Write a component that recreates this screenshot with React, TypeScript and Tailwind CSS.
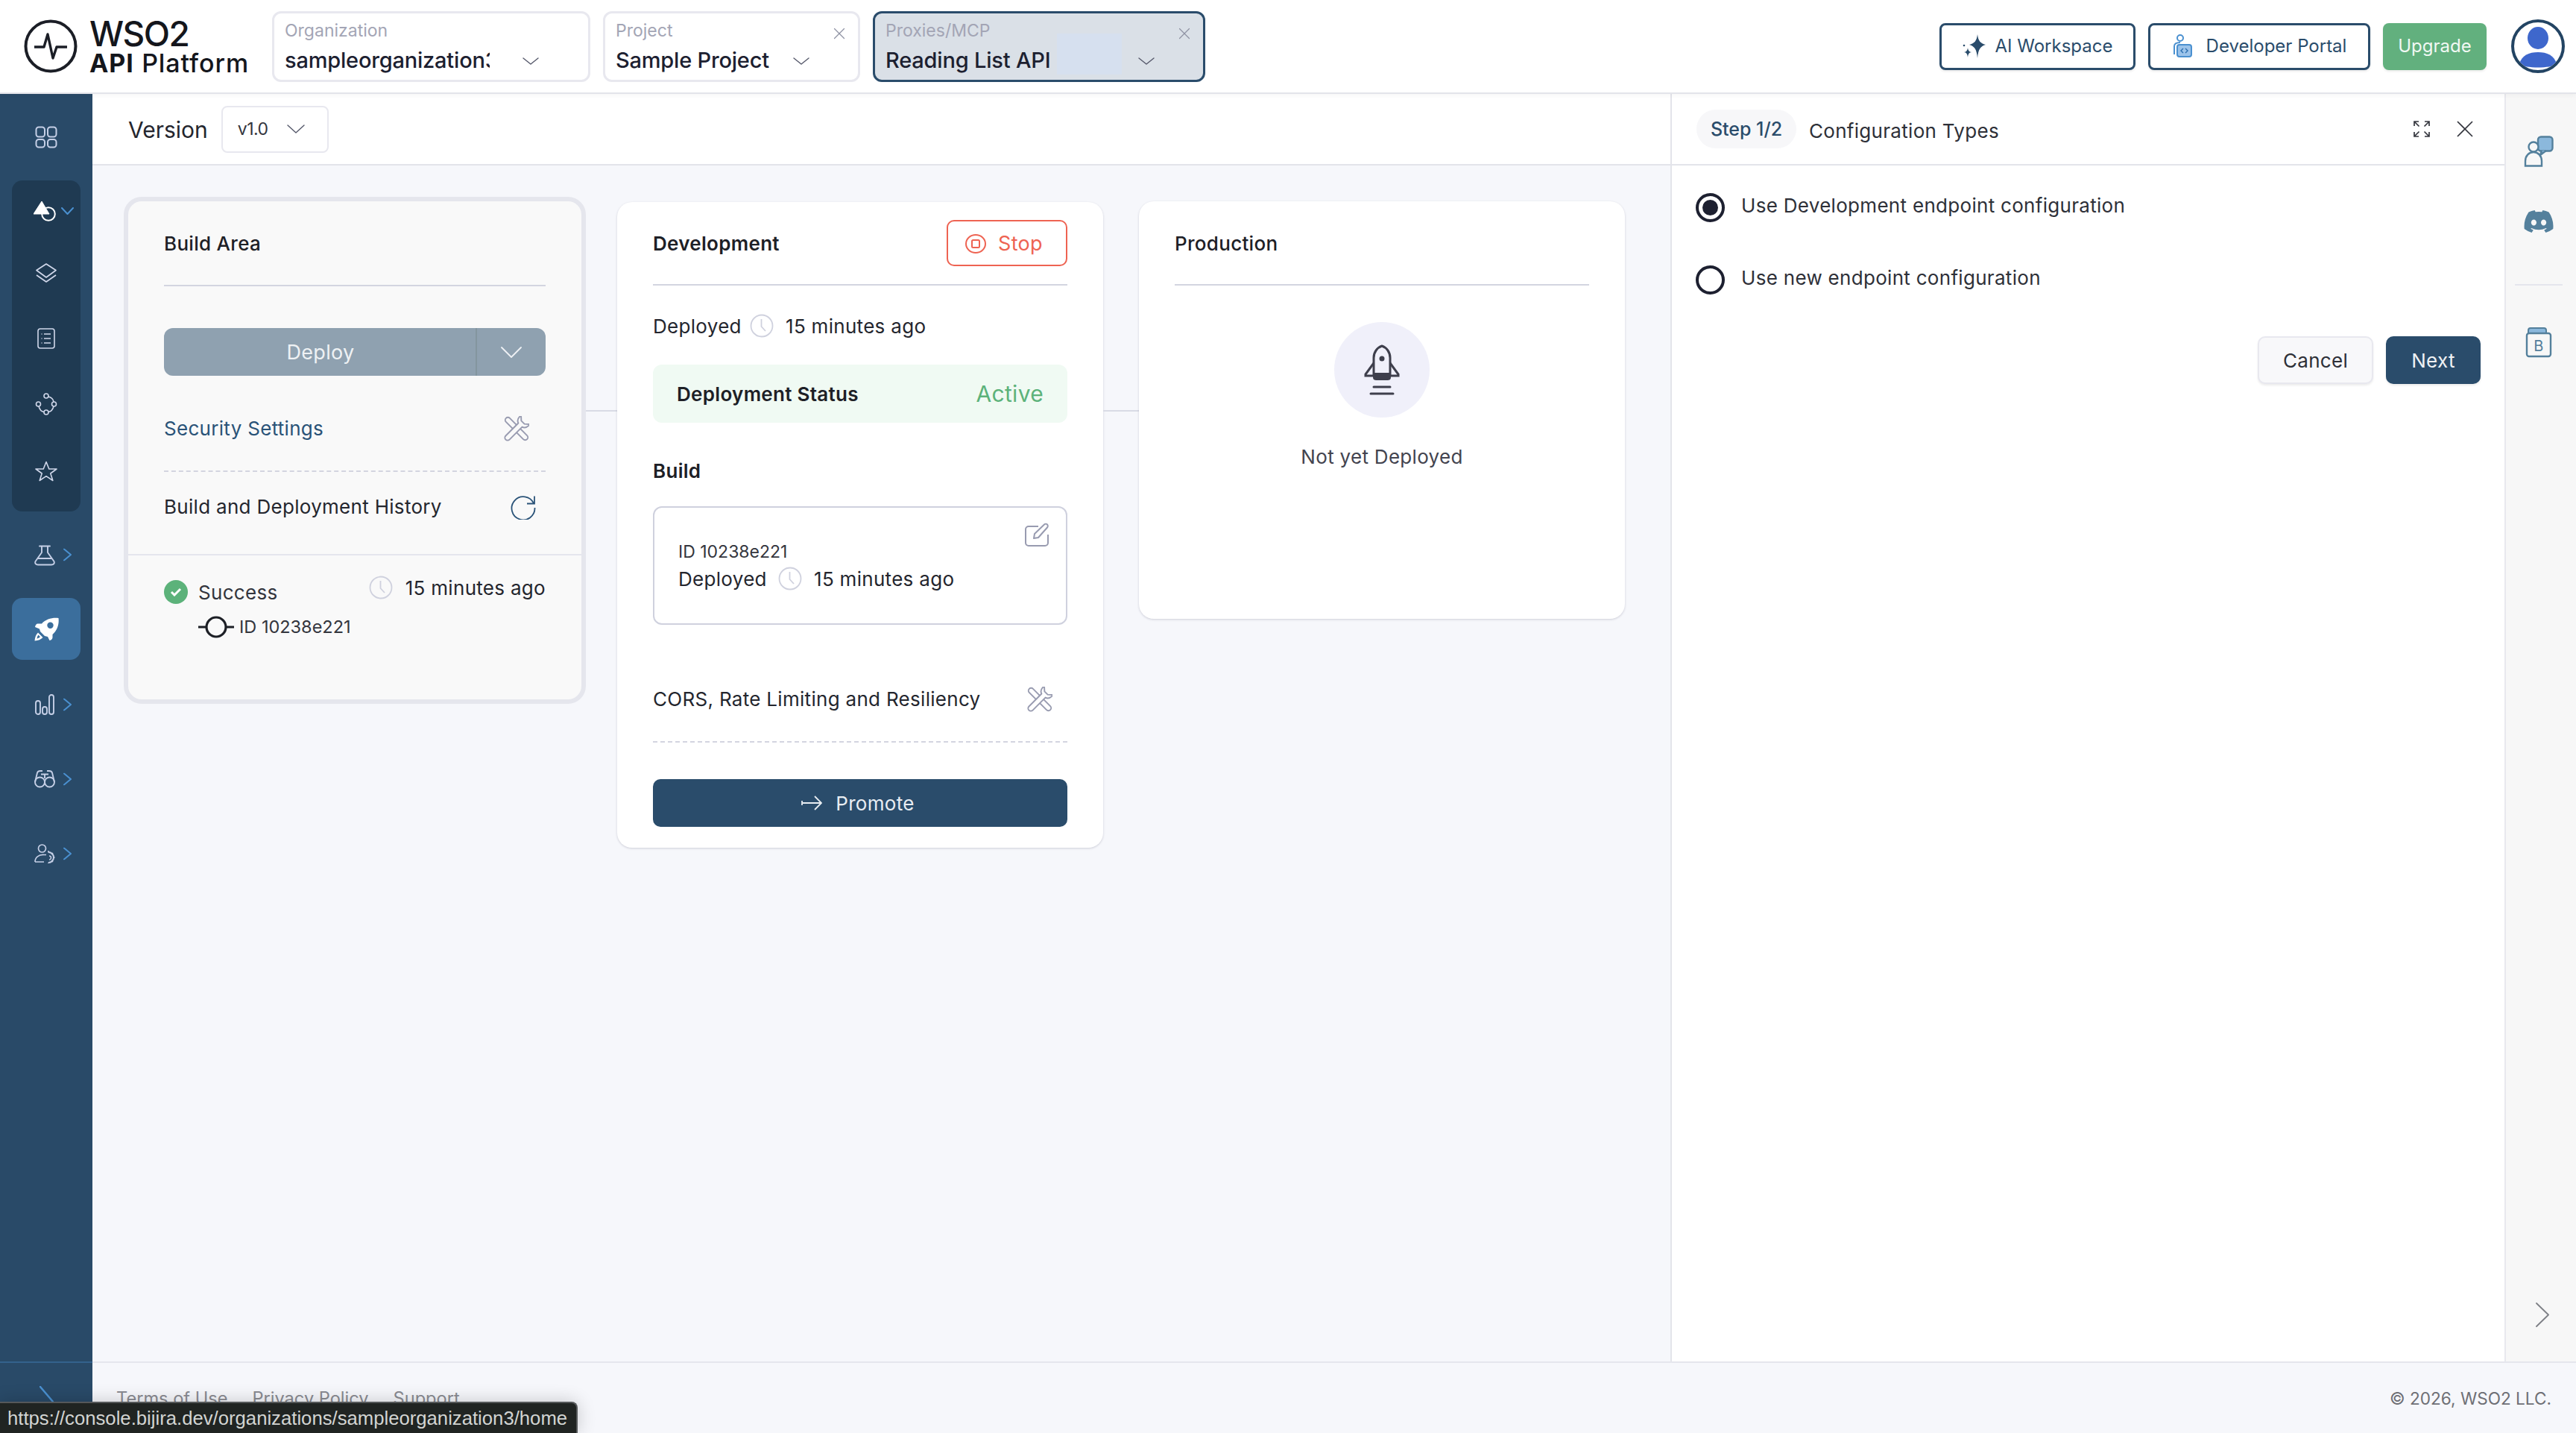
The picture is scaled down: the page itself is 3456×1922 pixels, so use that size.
import { X } from "lucide-react";

const Chev = ({ w, h, dir = "down", sw = 1.5, className }: { w: number; h: number; dir?: "down" | "right"; sw?: number; className?: string }) => (
  <svg width={w} height={h} viewBox={`0 0 ${w} ${h}`} fill="none" stroke="currentColor" strokeWidth={sw} strokeLinecap="round" strokeLinejoin="round" className={`shrink-0 ${className ?? ""}`}>
    {dir === "down" ? <path d={`M1 1L${w / 2} ${h - 1}L${w - 1} 1`} /> : <path d={`M1 1L${w - 1} ${h / 2}L1 ${h - 1}`} />}
  </svg>
);

const SideItem = ({ h, children }: { h: string; children: React.ReactNode }) => (
  <div className={`relative -mx-[16px] flex items-center justify-center pr-[4px] text-[#c5cfe6] ${h}`}>
    {children}
    <Chev w={11} h={17} dir="right" sw={2} className="absolute left-[85px] top-1/2 -translate-y-1/2 text-[#4a90d0]" />
  </div>
);

const Sidebar = () => (
  <aside className="flex w-[124px] shrink-0 flex-col bg-[#294a68]">
    <div className="flex flex-1 flex-col px-[16px]">
      <div className="flex h-[116px] items-center justify-center text-[#c5cfe6]">
        <svg width="30" height="30" viewBox="0 0 30 30" fill="none" stroke="currentColor" strokeWidth="2">
          <rect x="1.5" y="1.5" width="11.5" height="13" rx="3.5" />
          <rect x="17" y="1.5" width="11.5" height="13" rx="3.5" />
          <rect x="1.5" y="18" width="11.5" height="10.5" rx="3.5" />
          <rect x="17" y="18" width="11.5" height="10.5" rx="3.5" />
        </svg>
      </div>
      <div className="flex h-[444px] flex-col items-center rounded-[14px] bg-[#1f3a52] pt-[2px] text-[#d0d7ea]">
        <div className="relative flex h-[78px] w-full items-center justify-center">
          <svg width="30" height="28" viewBox="0 0 30 28" fill="none" className="mr-[4px]">
            <circle cx="20" cy="18" r="8.8" stroke="#fff" strokeWidth="2" />
            <path d="M11 1L21 18H0Z" fill="#fff" stroke="#fff" strokeWidth="1" strokeLinejoin="round" />
          </svg>
          <Chev w={17} h={10} sw={2} className="absolute left-[66px] top-[34px] text-[#4a90d0]" />
        </div>
        <div className="flex h-[88px] w-full items-center justify-center">
          <svg width="30" height="28" viewBox="0 0 30 28" fill="none" stroke="currentColor" strokeWidth="1.7" strokeLinejoin="round">
            <path d="M15 2L28 10.5L15 20L2 10.5Z" />
            <path d="M2 17L15 26L28 17" />
          </svg>
        </div>
        <div className="flex h-[88px] w-full items-center justify-center">
          <svg width="24" height="28" viewBox="0 0 24 28" fill="none" stroke="currentColor" strokeWidth="1.6">
            <rect x="1" y="1" width="22" height="26" rx="3" />
            <path d="M9 8h9M9 14h9M9 20h9M5.5 8h1M5.5 14h1M5.5 20h1" />
          </svg>
        </div>
        <div className="flex h-[88px] w-full items-center justify-center">
          <svg width="30" height="30" viewBox="0 0 30 30" fill="none" stroke="currentColor" strokeWidth="1.6">
            <circle cx="4.5" cy="15" r="3" />
            <circle cx="15" cy="4" r="3" />
            <circle cx="15" cy="26" r="3" />
            <circle cx="25.5" cy="15" r="3" />
            <path d="M18 5C22 6 24.5 9 25 12M5 18C6 22 9 25 12 25.5M18 25.5C21 25 24 22 25 18" />
          </svg>
        </div>
        <div className="flex h-[92px] w-full items-center justify-center">
          <svg width="30" height="28" viewBox="0 0 30 28" fill="none" stroke="currentColor" strokeWidth="1.6" strokeLinejoin="round">
            <path d="M15 1.5L18.8 11H29L20.8 17L23.8 26.5L15 20.7L6.2 26.5L9.2 17L1 11H11.2Z" />
          </svg>
        </div>
      </div>
      <SideItem h="h-[116px] pt-[2px]">
        <svg width="28" height="28" viewBox="0 0 28 28" fill="none" stroke="currentColor" strokeWidth="1.9" strokeLinejoin="round" strokeLinecap="round">
          <path d="M7 1.5H21M10 1.5V10L1.5 22C0.5 24.5 2 26.5 5 26.5H23C26 26.5 27.5 24.5 26.5 22L18 10V1.5" />
          <path d="M5 18H23" />
        </svg>
      </SideItem>
      <div className="flex h-[83px] items-center justify-center rounded-[14px] bg-[#3b6e9c] text-white">
        <svg width="33" height="32" viewBox="0 0 33 32" fill="white">
          <path fillRule="evenodd" d="M32.5 1C25 0 15.5 2 10 8.5L4.5 8.5C3 8.5 1.5 10 1 13L7 15.5L8 19L14 25L18 26L20.5 31C23 30.5 24.5 28.5 24.5 27L24.5 23C31 17 33.5 9 32.5 1ZM21.5 6.5A4.2 4.2 0 1 1 21.5 14.9A4.2 4.2 0 0 1 21.5 6.5Z" />
          <path fillRule="evenodd" d="M0.5 31.5C1 27 2 23 5 20.5L11.5 27C9 29.8 5 31.2 0.5 31.5ZM3.5 28.5C5 28.2 6.6 27.4 8 26.2L5.4 23.6C4.4 25 3.8 26.8 3.5 28.5Z" />
        </svg>
      </div>
      <SideItem h="h-[100px] mt-[10px]">
        <svg width="26" height="28" viewBox="0 0 26 28" fill="none" stroke="currentColor" strokeWidth="1.9">
          <rect x="1" y="9" width="6" height="18" rx="3" />
          <rect x="10" y="17" width="6" height="10" rx="3" />
          <rect x="19" y="1" width="6" height="26" rx="3" />
        </svg>
      </SideItem>
      <SideItem h="h-[100px]">
        <svg width="28" height="24" viewBox="0 0 28 24" fill="none" stroke="currentColor" strokeWidth="1.9">
          <circle cx="7.5" cy="16" r="6.5" />
          <circle cx="20.5" cy="16" r="6.5" />
          <path d="M1 16L4 3.5C4.5 2 6 1 8 1H11M27 16L24 3.5C23.5 2 22 1 20 1H17M9 5.5H19M14 5.5V11" />
        </svg>
      </SideItem>
      <SideItem h="h-[100px]">
        <svg width="28" height="26" viewBox="0 0 28 26" fill="none" stroke="currentColor" strokeWidth="1.7">
          <circle cx="10.5" cy="6" r="5" />
          <path d="M1 24C1 18 6 14 13 14.5H16M1 24H13" />
          <path d="M19 11A7 7 0 0 1 19 25" strokeWidth="2" />
          <path d="M20 16A2.5 2.5 0 0 1 20 21M19 9V11.5M25 12L23 13.8M27.5 18H25M25 24L23 22.2M19 27V25" strokeWidth="1.6" />
        </svg>
      </SideItem>
    </div>
    <div className="h-[96px] border-t-2 border-[#33628c] pl-[53px] pt-[31px]">
      <Chev w={19} h={42} dir="right" sw={2.5} className="text-[#4a90d0]" />
    </div>
  </aside>
);

const SelectBox = ({ label, value, box, active, close, extra, chevronPad, clip }: { label: string; value: string; box: string; active?: boolean; close?: boolean; extra?: boolean; chevronPad: string; clip?: string }) => (
  <div className={`relative h-[95px] rounded-[12px] border-[3px] pl-[14px] tracking-normal ${box} ${active ? "border-[#2a4c6b] bg-[#dae0e7]" : "border-[#e8e8ef] bg-white"}`}>
    <div className="mt-[10px] h-[26px] text-[23px] leading-[26px] text-[#a3a5b5]">{label}</div>
    <div className="mt-[9px] flex h-[36px] items-center">
      <span className={`overflow-hidden whitespace-nowrap text-[29px] font-medium leading-[36px] tracking-[-0.2px] text-[#1c2030] ${clip ?? ""}`}>{value}</span>
      {extra && <span className="ml-[9px] -mt-[18px] h-[55px] w-[87px] shrink-0 self-start bg-[#d6e0ef]" />}
      <Chev w={22} h={10} sw={1.4} className={`mt-[2px] text-[#55586a] ${chevronPad}`} />
    </div>
    {close && <X className="absolute right-[12px] top-[14px] h-[26px] w-[26px] text-[#8f92a3]" strokeWidth={1.1} />}
  </div>
);

const Header = () => (
  <header className="z-10 flex h-[126px] shrink-0 items-center border-b-2 border-[#e3e4ea] bg-white pl-[32px] pr-[15px] shadow-[0_2px_6px_rgba(0,0,0,0.04)]">
    <svg width="72" height="72" viewBox="0 0 72 72" fill="none" stroke="#1b1e26" className="shrink-0">
      <circle cx="36" cy="36" r="33.5" strokeWidth="4" />
      <path d="M14 37h13l5-17 7 32 5-15h14" strokeWidth="3.4" strokeLinejoin="round" />
    </svg>
    <div className="ml-[16px] w-[245px] shrink-0 tracking-normal text-[#14161c]">
      <div className="h-[46px] text-[46px] font-medium leading-[46px] tracking-[-1.5px]">WSO2</div>
      <div className="h-[34px] whitespace-nowrap text-[34px] leading-[34px] tracking-[0.9px]"><span className="font-bold">API</span> <span className="font-medium">Platform</span></div>
    </div>
    <div className="flex gap-[17px]">
      <SelectBox label="Organization" value="sampleorganization3" box="w-[427px]" clip="w-[275px] shrink-0" chevronPad="ml-[44px]" />
      <SelectBox label="Project" value="Sample Project" box="w-[345px]" close chevronPad="ml-[32px]" />
      <SelectBox label="Proxies/MCP" value="Reading List API" box="w-[446px]" active close extra chevronPad="ml-[22px]" />
    </div>
    <div className="ml-auto flex items-center gap-[17px] tracking-normal">
      <button className="flex h-[63px] w-[263px] items-center justify-center gap-[12px] rounded-[8px] border-[3px] border-[#2a4c6b] bg-white text-[24px] text-[#2a4c6b] shadow-[0_2px_3px_rgba(0,0,0,0.08)]">
        <svg width="32" height="34" viewBox="0 0 32 34" fill="#2a4c6b">
          <path d="M20 1 C21 10 24 13 31 15 C24 17 21 21 20 33 C19 21 16 17 9 15 C16 13 19 10 20 1 Z" />
          <path d="M7 19 C7.5 23 9 24.5 12 25 C9 25.5 7.5 27 7 32 C6.5 27 5 25.5 2 25 C5 24.5 6.5 23 7 19 Z" />
          <circle cx="2" cy="16" r="1.3" />
        </svg>
        AI Workspace
      </button>
      <button className="flex h-[63px] w-[298px] items-center justify-center gap-[18px] rounded-[8px] border-[3px] border-[#2a4c6b] bg-white text-[24px] text-[#2a4c6b] shadow-[0_2px_3px_rgba(0,0,0,0.08)]">
        <svg width="28" height="34" viewBox="0 0 28 34" fill="none" stroke="#4a90d0" strokeWidth="2">
          <circle cx="11" cy="6" r="4" />
          <path d="M3 28V17c0-3 3-5 8-5" />
          <rect x="7" y="15" width="19" height="16" rx="3" fill="#9cc3ea" />
          <path d="M15 20l-3 3 3 3M18 20l3 3-3 3" strokeWidth="1.4" stroke="#2a6eb0" />
        </svg>
        Developer Portal
      </button>
      <button className="flex h-[63px] w-[139px] items-center justify-center rounded-[8px] bg-[#62b07e] text-[24px] text-[#f1f8f3] shadow-[0_2px_3px_rgba(0,0,0,0.08)]">Upgrade</button>
      <div className="ml-[16px] flex h-[72px] w-[72px] items-center justify-center overflow-hidden rounded-full border-[4px] border-[#234463] bg-white">
        <svg width="64" height="64" viewBox="0 0 64 64" fill="#3e67cc">
          <ellipse cx="32" cy="21" rx="14" ry="15" />
          <path d="M7 56 C10 44 20 40 32 40 C44 40 54 44 57 56 C50 62 14 62 7 56 Z" />
        </svg>
      </div>
    </div>
  </header>
);

const ClockIcon = () => (
  <svg width="32" height="32" viewBox="0 0 32 32" fill="none" stroke="#cfd1de" strokeWidth="1.8" className="shrink-0">
    <circle cx="16" cy="16" r="14.5" />
    <path d="M15.5 7V17L21 23" />
  </svg>
);

const ToolsIcon = ({ bg }: { bg: string }) => (
  <svg width="34" height="34" viewBox="-17 -17 34 34" fill={bg} stroke="#989bb0" strokeWidth="1.9" strokeLinejoin="round">
    <rect x="-3.6" y="-20" width="7.2" height="40" rx="3.6" transform="rotate(-45)" />
    <path transform="rotate(45)" d="M-3.6 17a3.6 3.6 0 0 0 7.2 0V-7C7-8 9-11 8.5-17L3-12H-3L-8.5-17C-9-11-7-8-3.6-7Z" />
  </svg>
);

const Deployed = ({ labelW }: { labelW: string }) => (
  <div className="flex h-[32px] items-center whitespace-nowrap text-[26px] text-[#24262e]">
    <span className={labelW}>Deployed</span>
    <ClockIcon />
    <span className="ml-[16px]">15 minutes ago</span>
  </div>
);

const BuildArea = () => (
  <section className="h-[680px] w-[620px] shrink-0 rounded-[24px] border-[6px] border-[#e5e6ed] bg-[#f9f9f9]">
    <div className="mx-[48px] flex h-[114px] items-start border-b-2 border-[#d3d5e0] pt-[41px] text-[26px] font-medium leading-[32px] text-[#1d2026]">Build Area</div>
    <div className="mx-[48px] mt-[56px] flex h-[64px] rounded-[12px] bg-[#8fa1b0] text-[#eef1f4]">
      <div className="flex flex-1 items-center justify-center border-r-2 border-[#83959f] pl-[2px] pt-[2px] text-[27px]">Deploy</div>
      <div className="flex w-[92px] items-center justify-center"><Chev w={28} h={15} sw={1.8} /></div>
    </div>
    <div className="mx-[48px] mt-[32px] flex h-[97px] items-start justify-between border-b-2 border-dashed border-[#d3d5e0] pt-[22px]">
      <span className="text-[26px] leading-[34px] text-[#2a5378]">Security Settings</span>
      <span className="mr-[22px]"><ToolsIcon bg="#f9f9f9" /></span>
    </div>
    <div className="mx-[48px] flex h-[110px] items-start justify-between pt-[30px]">
      <span className="text-[26px] leading-[34px] text-[#24262e]">Build and Deployment History</span>
      <svg width="34" height="34" viewBox="0 0 34 34" fill="none" stroke="#2a5378" strokeWidth="1.8" className="mr-[13px]">
        <path d="M31 12A15.5 15.5 0 1 0 32.5 18" />
        <path d="M32 2.5V12.5H22" />
      </svg>
    </div>
    <div className="flex justify-between border-t-2 border-[#e5e6ed] px-[48px] pt-[29px]">
      <div>
        <div className="flex h-[40px] items-center gap-[14px]">
          <span className="flex h-[32px] w-[32px] items-center justify-center rounded-full bg-[#5cb27a]">
            <svg width="16" height="12" viewBox="0 0 16 12" fill="none" stroke="#fff" strokeWidth="3"><path d="M2 6l4 4 8-8" /></svg>
          </span>
          <span className="text-[26px] text-[#33353d]">Success</span>
        </div>
        <div className="mt-[11px] flex h-[32px] items-center gap-[7px] pl-[46px]">
          <svg width="48" height="32" viewBox="0 0 48 32" fill="none" stroke="#1d2026" strokeWidth="3.2">
            <circle cx="24" cy="16" r="13" />
            <path d="M0 16h11M37 16h11" />
          </svg>
          <span className="text-[23.5px] tracking-normal text-[#33353d]">ID 10238e221</span>
        </div>
      </div>
      <div className="-mt-[4px] flex h-[36px] items-center gap-[17px] whitespace-nowrap text-[26px] text-[#24262e]">
        <ClockIcon />
        15 minutes ago
      </div>
    </div>
  </section>
);

const Development = () => (
  <section className="mt-[7px] h-[866px] w-[652px] shrink-0 rounded-[20px] bg-white px-[48px] shadow-[0_1px_3px_rgba(60,60,90,0.22)]">
    <div className="flex h-[112px] items-start justify-between border-b-2 border-[#d3d5e0] pt-[24px]">
      <span className="mt-[16px] text-[26px] font-semibold leading-[32px] text-[#1d2026]">Development</span>
      <button className="flex h-[62px] w-[162px] items-center justify-center gap-[16px] rounded-[10px] border-2 border-[#ee6352] pr-[8px] pt-[2px] text-[27px] text-[#ee6352]">
        <svg width="28" height="28" viewBox="0 0 28 28" fill="none" stroke="currentColor" strokeWidth="2">
          <ellipse cx="14" cy="14" rx="13" ry="12" />
          <rect x="9" y="9" width="10" height="10" rx="1.5" />
        </svg>
        Stop
      </button>
    </div>
    <div className="mt-[38px]"><Deployed labelW="w-[130px]" /></div>
    <div className="mt-[36px] flex h-[78px] items-center justify-between rounded-[12px] bg-[#f0faf3] px-[32px]">
      <span className="text-[26px] font-semibold text-[#1d2026]">Deployment Status</span>
      <span className="text-[30px] text-[#5cb27a]">Active</span>
    </div>
    <div className="mt-[49px] h-[32px] text-[26px] font-semibold leading-[32px] text-[#1d2026]">Build</div>
    <div className="relative mt-[31px] h-[159px] rounded-[12px] border-2 border-[#cfd1de] pl-[32px] pt-[44px]">
      <div className="h-[30px] text-[23px] leading-[30px] tracking-normal text-[#33353d]">ID 10238e221</div>
      <div className="mt-[5px]"><Deployed labelW="w-[134px]" /></div>
      <svg width="34" height="34" viewBox="0 0 34 34" fill="none" stroke="#989bb0" strokeWidth="2" className="absolute right-[22px] top-[20px]">
        <path d="M19 5H6a4 4 0 0 0-4 4v18a4 4 0 0 0 4 4h22a4 4 0 0 0 4-4V16" />
        <path d="M13 21L14 15L27 2.5C28 1.5 30 1.5 31 2.5C32 3.5 32 5.5 31 6.5L19 20Z" strokeLinejoin="round" />
      </svg>
    </div>
    <div className="mt-[62px] flex h-[96px] items-start justify-between border-b-2 border-dashed border-[#d3d5e0] pt-[21px]">
      <span className="whitespace-nowrap text-[26px] leading-[34px] text-[#24262e]">CORS, Rate Limiting and Resiliency</span>
      <span className="mr-[20px]"><ToolsIcon bg="#fff" /></span>
    </div>
    <button className="mt-[49px] flex h-[64px] w-full items-center justify-center gap-[18px] rounded-[10px] bg-[#2a4c6b] pr-[6px] text-[26px] text-[#e8edf2]">
      <svg width="28" height="22" viewBox="0 0 28 22" fill="none" stroke="currentColor" strokeWidth="1.8">
        <path d="M1 8V14M1 11H27M18 2L27 11L18 20" />
      </svg>
      Promote
    </button>
  </section>
);

const Production = () => (
  <section className="mt-[6px] h-[560px] w-[652px] shrink-0 rounded-[20px] bg-white px-[48px] shadow-[0_1px_3px_rgba(60,60,90,0.22)]">
    <div className="h-[113px] border-b-2 border-[#d3d5e0] pt-[41px] text-[26px] font-medium leading-[32px] text-[#1d2026]">Production</div>
    <div className="mx-auto mt-[49px] flex h-[128px] w-[128px] items-center justify-center rounded-full bg-[#f0f0fa]">
      <svg width="52" height="68" viewBox="0 0 52 68" fill="none" stroke="#3e3f4c" strokeWidth="3">
        <path d="M15 41V18C15 10 20 4 26 2C32 4 37 10 37 18V41Z" />
        <path d="M15 25L4 40V42H15M37 25L48 40V42H37" />
        <path d="M14 38h24v6a4 4 0 0 1-4 4H18a4 4 0 0 1-4-4Z" fill="#3e3f4c" stroke="none" />
        <circle cx="26" cy="19" r="3.5" fill="#3e3f4c" stroke="none" />
        <path d="M15 57h22M11 66h30" strokeLinecap="round" />
      </svg>
    </div>
    <p className="mt-[37px] text-center text-[26px] leading-[32px] text-[#43444f]">Not yet Deployed</p>
  </section>
);

const Canvas = () => (
  <div className="flex-1 bg-[#f6f7fb] pl-[42px] pt-[42px]">
    <div className="flex items-start">
      <BuildArea />
      <div className="mt-[286px] h-[2px] w-[42px] bg-[#d9dbe5]" />
      <Development />
      <div className="mt-[286px] h-[2px] w-[48px] bg-[#d9dbe5]" />
      <Production />
    </div>
  </div>
);

const StepPanel = () => (
  <aside className="flex w-[1119px] shrink-0 flex-col border-l-2 border-[#e3e4ea] bg-white">
    <div className="flex h-[96px] shrink-0 items-center border-b-2 border-[#e3e4ea] pl-[33px] pr-[42px]">
      <span className="flex h-[52px] w-[134px] items-center justify-center rounded-[26px] bg-[#f7f7f9] pt-[2px] text-[25px] font-medium tracking-normal text-[#2a4c6b]">Step 1/2</span>
      <span className="ml-[17px] pt-[4px] text-[26px] text-[#2e3038]">Configuration Types</span>
      <svg className="ml-auto" width="22" height="22" viewBox="0 0 22 22" fill="none" stroke="#33353d" strokeWidth="1.7">
        <path d="M1 7V1h6M21 7V1h-6M1 15v6h6M21 15v6h-6M2 2l5.5 5.5M20 2l-5.5 5.5M2 20l5.5-5.5M20 20l-5.5-5.5" />
      </svg>
      <svg className="ml-[36px]" width="22" height="22" viewBox="0 0 22 22" fill="none" stroke="#33353d" strokeWidth="1.7">
        <path d="M1 1L21 21M21 1L1 21" />
      </svg>
    </div>
    <div className="flex flex-col pl-[32px] pr-[32px]">
      <label className="mt-[37px] flex items-start gap-[22px]">
        <span className="flex h-[39px] w-[39px] shrink-0 items-center justify-center rounded-full border-[4px] border-[#1d2030]"><span className="h-[21px] w-[21px] rounded-full bg-[#1d2030]" /></span>
        <span className="-mt-[2px] text-[26px] leading-[38px] text-[#2e3038]">Use Development endpoint configuration</span>
      </label>
      <label className="mt-[58px] flex items-start gap-[22px]">
        <span className="h-[39px] w-[39px] shrink-0 rounded-full border-[4px] border-[#1d2030]" />
        <span className="-mt-[2px] text-[26px] leading-[38px] text-[#2e3038]">Use new endpoint configuration</span>
      </label>
      <div className="mt-[56px] flex justify-end gap-[17px]">
        <button className="h-[64px] w-[155px] rounded-[10px] border-2 border-[#e8e8ef] bg-[#f8f8fa] text-[26px] text-[#2e3038] shadow-[0_2px_3px_rgba(0,0,0,0.08)]">Cancel</button>
        <button className="h-[64px] w-[127px] rounded-[10px] bg-[#2a4c6b] text-[26px] text-[#eef1f4] shadow-[0_2px_3px_rgba(0,0,0,0.08)]">Next</button>
      </div>
    </div>
  </aside>
);

const ActionRail = () => (
  <aside className="flex w-[96px] shrink-0 flex-col items-center border-l-2 border-[#e8e8ee] bg-[#f7f7f7] pr-[6px] text-[#54809c]">
    <svg className="mt-[56px]" width="40" height="42" viewBox="0 0 40 42" fill="none" stroke="#54809c" strokeWidth="2.4">
      <rect x="19" y="1.5" width="19.5" height="19" rx="4" fill="#8bb8dc" />
      <path d="M24 20L22 26L30 20" fill="#8bb8dc" />
      <circle cx="13" cy="15" r="6.5" fill="#f7f7f7" />
      <path d="M2 40.5V34C2 27 7 22 13 22C19 22 24 27 24 34V40.5Z" fill="#f7f7f7" />
    </svg>
    <svg className="mt-[58px]" width="40" height="31" viewBox="0 0 40 31" fill="#54809c">
      <path fillRule="evenodd" d="M33.5 2.6A33 33 0 0 0 25.4 0L24.3 2.2A30 30 0 0 0 15.7 2.2L14.6 0A33 33 0 0 0 6.5 2.6C1.4 10.2 0 17.6.7 24.9A33 33 0 0 0 10.6 30L12.8 26.5A21 21 0 0 1 9.3 24.8L10.2 24.1A23.6 23.6 0 0 0 29.8 24.1L30.7 24.8A21 21 0 0 1 27.2 26.5L29.4 30A33 33 0 0 0 39.3 24.9C40.2 16.5 37.9 9.2 33.5 2.6ZM13.4 20.5C11.4 20.5 9.8 18.7 9.8 16.5S11.4 12.5 13.4 12.5 17 14.3 17 16.5 15.4 20.5 13.4 20.5ZM26.6 20.5C24.6 20.5 23 18.7 23 16.5S24.6 12.5 26.6 12.5 30.2 14.3 30.2 16.5 28.6 20.5 26.6 20.5Z" />
    </svg>
    <div className="mt-[68px] h-[2px] w-[64px] bg-[#e5e6ed]" />
    <svg className="mt-[55px]" width="36" height="42" viewBox="0 0 36 42" fill="none">
      <path d="M4 8V5a3 3 0 0 1 3-3h18a3 3 0 0 1 3 3v4H4Z" fill="#8bb8dc" stroke="#54809c" strokeWidth="2" />
      <rect x="2" y="9" width="32" height="31" rx="3" stroke="#54809c" strokeWidth="2.4" />
      <text x="18" y="33" textAnchor="middle" fontSize="20" fill="#54809c" fontFamily="Inter, sans-serif">B</text>
    </svg>
    <Chev w={18} h={33} dir="right" sw={1.8} className="mb-[46px] ml-[10px] mt-auto text-[#7d7f85]" />
  </aside>
);

const Footer = () => (
  <footer className="flex h-[96px] shrink-0 items-start justify-between border-t-2 border-[#e5e6ed] bg-[#f6f7fb] pl-[32px] pr-[33px] pt-[33px] leading-[30px] tracking-normal text-[#6e6f75]">
    <div className="flex gap-[33px] text-[23.6px] text-[#8a8b92]">
      <span>Terms of Use</span>
      <span>Privacy Policy</span>
      <span>Support</span>
    </div>
    <span className="text-[22.6px]">© 2026, WSO2 LLC.</span>
  </footer>
);

export default function App() {
  return (
    <div className="relative flex h-[1922px] w-[3456px] flex-col overflow-hidden bg-white font-['Inter',sans-serif] tracking-[0.3px]">
      <Header />
      <div className="flex min-h-0 flex-1">
        <Sidebar />
        <main className="flex min-w-0 flex-1 flex-col">
          <div className="flex min-h-0 flex-1">
            <div className="flex min-w-0 flex-1 flex-col">
              <div className="flex h-[96px] shrink-0 items-center border-b-2 border-[#e3e4ea] bg-white pl-[48px]">
                <span className="pt-[3px] text-[30px] tracking-normal text-[#24262e]">Version</span>
                <div className="ml-[18px] flex h-[63px] w-[144px] items-center rounded-[8px] border-2 border-[#e8e8ef] pl-[20px] text-[23px] tracking-[-0.5px] text-[#33353d]">
                  v1.0
                  <Chev w={24} h={12} sw={1.4} className="ml-[25px] text-[#55586a]" />
                </div>
              </div>
              <Canvas />
            </div>
            <StepPanel />
            <ActionRail />
          </div>
          <Footer />
        </main>
      </div>
      <div className="absolute bottom-0 left-0 flex h-[42px] w-[775px] items-center rounded-tr-[8px] border-r-2 border-t-2 border-[#55585a] bg-[#202422] pl-[10px] font-['Liberation_Sans',sans-serif] text-[25.7px] tracking-normal whitespace-nowrap text-[#d2d4d2] shadow-[0_0_24px_rgba(0,0,0,0.2)]">
        https://console.bijira.dev/organizations/sampleorganization3/home
      </div>
    </div>
  );
}
